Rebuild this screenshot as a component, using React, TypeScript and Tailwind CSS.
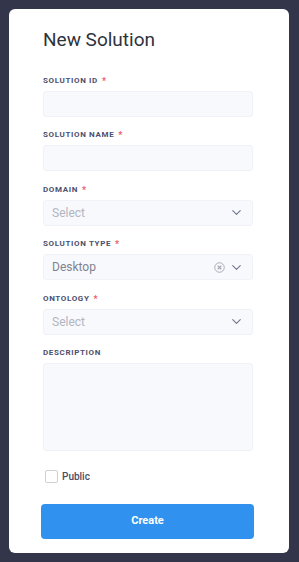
import { ChevronDown } from "lucide-react"

const fields = [
  { label: "SOLUTION ID", required: true, kind: "input" },
  { label: "SOLUTION NAME", required: true, kind: "input" },
  { label: "DOMAIN", required: true, kind: "select", placeholder: "Select" },
  { label: "SOLUTION TYPE", required: true, kind: "select", value: "Desktop" },
  { label: "ONTOLOGY", required: true, kind: "select", placeholder: "Select" },
]

function ClearIcon() {
  return (
    <svg width="11" height="11" viewBox="0 0 12 12" fill="none" stroke="#a3a6b2" strokeWidth="1">
      <circle cx="6" cy="6" r="5.2" />
      <path d="M4.1 4.1l3.8 3.8M7.9 4.1l-3.8 3.8" strokeWidth="1.2" />
    </svg>
  )
}

function Label({ text, required }: { text: string; required?: boolean }) {
  return (
    <div className="h-[10px] mb-[5px] flex items-center text-[8px] leading-[10px] font-bold tracking-[0.08em] text-[#4d4f6e]">
      {text}
      {required && <span className="ml-[4px] text-[#f0565f] text-[9px]">*</span>}
    </div>
  )
}

export default function App() {
  return (
    <div className="min-h-[562px] w-full bg-[#33364a] pt-[9px] pl-[9px] pr-[10px] pb-[9px]" style={{ fontFamily: "Roboto, 'Liberation Sans', sans-serif" }}>
      <div className="w-[280px] h-[544px] bg-white rounded-[6px] pl-[34px] pr-[36px] pt-[18px]">
        <h1 className="text-[19px] leading-[26px] text-[#2f333d] font-normal mb-[23px]">New Solution</h1>

        {fields.map((f) => (
          <div key={f.label} className="mb-[13.4px]">
            <Label text={f.label} required={f.required} />
            <div className="h-[26px] w-[210px] rounded-[3px] bg-[#f8f9fd] border border-[#f1f2f7] flex items-center pl-[8px] pr-[8px]">
              {f.kind === "select" && (
                <>
                  <span className={`flex-1 text-[12px] ${f.value ? "text-[#80838f]" : "text-[#b3b5bf]"}`}>
                    {f.value ?? f.placeholder}
                  </span>
                  {f.value && (
                    <span className="mr-[4px] flex items-center">
                      <ClearIcon />
                    </span>
                  )}
                  <ChevronDown size={15} strokeWidth={1.7} color="#6e7488" />
                </>
              )}
            </div>
          </div>
        ))}

        <div>
          <Label text="DESCRIPTION" />
          <div className="h-[88px] w-[210px] rounded-[3px] bg-[#f8f9fd] border border-[#f1f2f7]" />
        </div>

        <div className="flex items-center mt-[18px] ml-[2px]">
          <div className="w-[13px] h-[13px] border border-[#cfd0d4] rounded-[2px] bg-white" />
          <span className="ml-[4px] text-[10px] font-medium text-[#4a4c68]">Public</span>
        </div>

        <button className="mt-[20px] -ml-[2px] w-[213px] h-[35px] rounded-[4px] bg-[#3191ee] text-white text-[11px] font-bold">
          Create
        </button>
      </div>
    </div>
  )
}
